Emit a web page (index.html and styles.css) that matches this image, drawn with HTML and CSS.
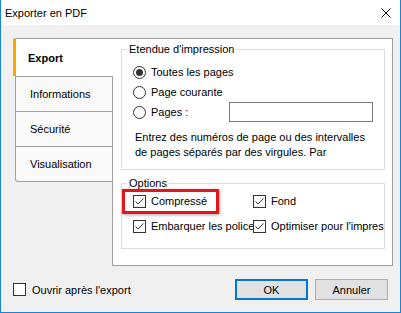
FILE: index.html
```html
<!DOCTYPE html>
<html lang="fr">
<head>
  <meta charset="UTF-8">
  <title>Exporter en PDF</title>
  <link rel="stylesheet" href="styles.css">
</head>
<body>
  <div class="window">
    <!-- Title bar -->
    <div class="titlebar">
      <span class="title">Exporter en PDF</span>
      <svg class="close" width="10" height="10" viewBox="0 0 10 10">
        <path d="M0.5 0.5 L9.5 9.5 M9.5 0.5 L0.5 9.5" stroke="#000" stroke-width="1" fill="none"/>
      </svg>
    </div>

    <div class="client">
      <div class="main">
        <!-- Vertical tabs -->
        <div class="tabs">
          <div class="tab active">Export</div>
          <div class="tab">Informations</div>
          <div class="tab">Sécurité</div>
          <div class="tab">Visualisation</div>
        </div>

        <!-- Export page -->
        <div class="panel">
          <fieldset class="group range">
            <legend>Etendue d'impression</legend>
            <div class="radio-row first"><span class="radio checked"></span>Toutes les pages</div>
            <div class="radio-row"><span class="radio"></span>Page courante</div>
            <div class="radio-row"><span class="radio"></span>Pages :<span class="textbox"></span></div>
            <p class="hint">Entrez des numéros de page ou des intervalles<br>de pages séparés par des virgules. Par</p>
          </fieldset>

          <fieldset class="group options">
            <legend>Options</legend>
            <div class="check-grid">
              <div class="check-row"><span class="box checked"><svg viewBox="0 0 11 11"><path d="M1.5 5.5 L4 8 L9.5 2.5"/></svg></span>Compressé</div>
              <div class="check-row"><span class="box checked"><svg viewBox="0 0 11 11"><path d="M1.5 5.5 L4 8 L9.5 2.5"/></svg></span>Fond</div>
              <div class="check-row"><span class="box checked"><svg viewBox="0 0 11 11"><path d="M1.5 5.5 L4 8 L9.5 2.5"/></svg></span>Embarquer les polices</div>
              <div class="check-row"><span class="box checked"><svg viewBox="0 0 11 11"><path d="M1.5 5.5 L4 8 L9.5 2.5"/></svg></span>Optimiser pour l'impres</div>
              <div class="highlight"></div>
            </div>
          </fieldset>
        </div>
      </div>

      <!-- Bottom row -->
      <div class="footer">
        <div class="check-row"><span class="box"></span>Ouvrir après l'export</div>
        <div class="buttons">
          <button class="btn default">OK</button>
          <button class="btn">Annuler</button>
        </div>
      </div>
    </div>
  </div>
</body>
</html>
```

FILE: styles.css
```css
/* General */
body {
  margin: 0;
  font-family: "Liberation Sans", Arial, sans-serif;
  font-size: 11px;
  color: #000;
  background: #fff;
}

.window {
  width: 401px;
  height: 313px;
  box-sizing: border-box;
  border: 1px solid #1883d7; /* windows accent border */
  border-top: 0;
  background-color: #f0f0f0;
  display: flex;
  flex-direction: column;
}

/* Title bar */
.titlebar {
  height: 25px;
  flex-shrink: 0;
  background-color: #fff;
  display: flex;
  align-items: center;
  justify-content: space-between;
  padding-left: 4px;
}

.close {
  margin-right: 9px;
}

.client {
  flex: 1;
  padding: 13px 10px 0 12px;
  display: flex;
  flex-direction: column;
}

.main {
  display: flex;
  height: 228px;
}

/* Tabs */
.tabs {
  width: 99px;
  flex-shrink: 0;
  display: flex;
  flex-direction: column;
}

.tab {
  box-sizing: border-box;
  height: 35px;
  margin-left: 2px;
  padding-left: 14px;
  border: 1px solid #a0a0a0;
  border-right: 0;
  border-bottom: 0;
  background-color: #f9f9f9;
  display: flex;
  align-items: center;
}

.tab.active {
  height: 38px;
  margin-left: 0;
  margin-right: -1px;
  padding-left: 12px;
  border-left: 3px solid #ffa500; /* orange marker */
  border-top-left-radius: 2px;
  background-color: #fff;
  font-weight: bold;
  position: relative;
  z-index: 1;
}

.tab:last-child {
  height: 36px;
  border-bottom: 1px solid #a0a0a0;
  border-bottom-left-radius: 3px;
}

/* Page */
.panel {
  flex: 1;
  box-sizing: border-box;
  border: 1px solid #a0a0a0;
  background-color: #fff;
  padding: 2px 7px 0 8px;
}

.group {
  border: 1px solid #dcdcdc;
  margin: 0;
  padding: 0;
  min-width: 0;
}

.group legend {
  padding: 0 2px;
  margin-left: 5px;
  line-height: 16px;
}

.range {
  padding-bottom: 9px;
}

.options {
  margin-top: 5px;
  padding-bottom: 12px;
}

.radio-row {
  display: flex;
  align-items: center;
  height: 20px;
  padding-left: 11px;
}

.radio-row.first {
  margin-top: 5px;
}

.radio {
  width: 13px;
  height: 13px;
  box-sizing: border-box;
  border: 1px solid #333;
  border-radius: 50%;
  margin-right: 5px;
  display: flex;
  align-items: center;
  justify-content: center;
}

.radio.checked::after {
  content: "";
  width: 7px;
  height: 7px;
  border-radius: 50%;
  background-color: #333;
}

.textbox {
  width: 144px;
  height: 20px;
  box-sizing: border-box;
  margin-left: auto;
  margin-right: 11px;
  border: 1px solid #7a7a7a;
  background-color: #fff;
}

.hint {
  margin: 8px 0 0;
  padding-left: 13px;
  line-height: 15px;
  white-space: nowrap;
}

/* Checkboxes */
.check-grid {
  display: grid;
  grid-template-columns: 120px 1fr;
  row-gap: 5px;
  padding-left: 11px;
  position: relative;
}

.check-row {
  display: flex;
  align-items: center;
  height: 20px;
  white-space: nowrap;
}

.box {
  width: 13px;
  height: 13px;
  flex-shrink: 0;
  box-sizing: border-box;
  border: 1px solid #333;
  background-color: #fff;
  margin-right: 5px;
}

.box svg {
  display: block;
  width: 11px;
  height: 11px;
}

.box path {
  fill: none;
  stroke: #333;
  stroke-width: 1;
}

.highlight {
  position: absolute;
  left: 0;
  top: -2px;
  width: 97px;
  height: 25px;
  box-sizing: border-box;
  border: 3px solid #e4141b;
  box-shadow: 1px 1px 3px rgba(0, 0, 0, 0.35);
}

/* Footer */
.footer {
  display: flex;
  align-items: center;
  margin-top: 13px;
}

.footer .box {
  margin-right: 6px;
}

.buttons {
  margin-left: auto;
  margin-right: 2px;
  display: flex;
  gap: 7px;
}

.btn {
  width: 73px;
  height: 21px;
  box-sizing: border-box;
  padding: 0;
  border: 1px solid #adadad;
  background-color: #e1e1e1;
  font: inherit;
  color: #000;
}

.btn.default {
  border: 2px solid #0078d7;
}
```
